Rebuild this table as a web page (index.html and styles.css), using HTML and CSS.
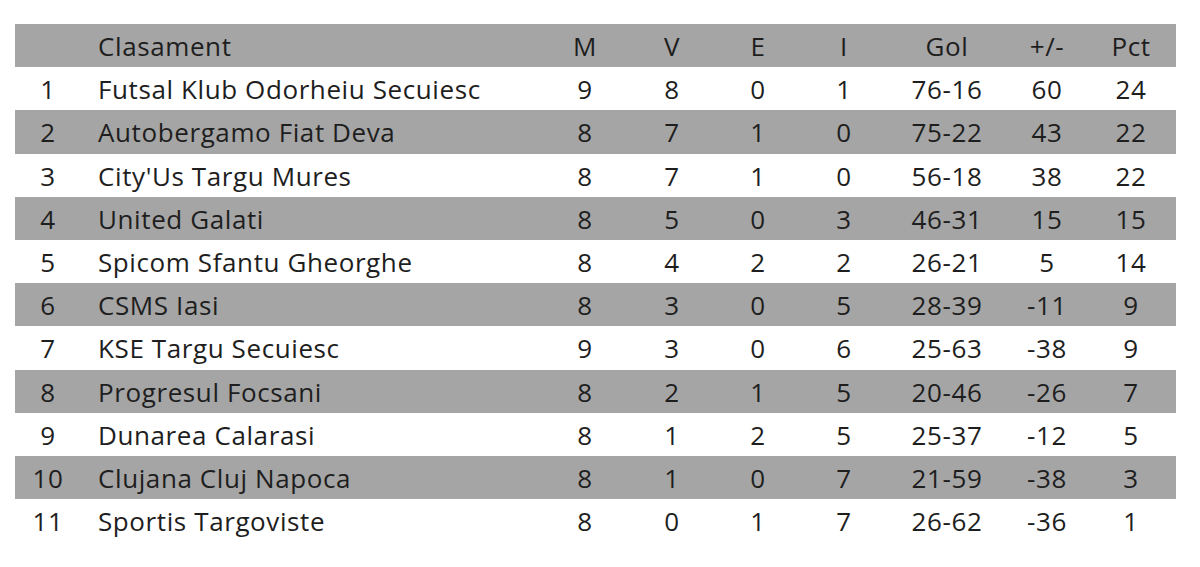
FILE: index.html
```html
<!DOCTYPE html>
<html>
<head>
<meta charset="utf-8">
<link rel="stylesheet" href="styles.css">
</head>
<body>
<div class="standings">
  <div class="row head"><span class="c-pos"></span><span class="c-name">Clasament</span><span class="c-m">M</span><span class="c-v">V</span><span class="c-e">E</span><span class="c-i">I</span><span class="c-gol">Gol</span><span class="c-diff">+/-</span><span class="c-pct">Pct</span></div>
  <div class="row"><span class="c-pos">1</span><span class="c-name">Futsal Klub Odorheiu Secuiesc</span><span class="c-m">9</span><span class="c-v">8</span><span class="c-e">0</span><span class="c-i">1</span><span class="c-gol">76-16</span><span class="c-diff">60</span><span class="c-pct">24</span></div>
  <div class="row alt"><span class="c-pos">2</span><span class="c-name">Autobergamo Fiat Deva</span><span class="c-m">8</span><span class="c-v">7</span><span class="c-e">1</span><span class="c-i">0</span><span class="c-gol">75-22</span><span class="c-diff">43</span><span class="c-pct">22</span></div>
  <div class="row"><span class="c-pos">3</span><span class="c-name">City'Us Targu Mures</span><span class="c-m">8</span><span class="c-v">7</span><span class="c-e">1</span><span class="c-i">0</span><span class="c-gol">56-18</span><span class="c-diff">38</span><span class="c-pct">22</span></div>
  <div class="row alt"><span class="c-pos">4</span><span class="c-name">United Galati</span><span class="c-m">8</span><span class="c-v">5</span><span class="c-e">0</span><span class="c-i">3</span><span class="c-gol">46-31</span><span class="c-diff">15</span><span class="c-pct">15</span></div>
  <div class="row"><span class="c-pos">5</span><span class="c-name">Spicom Sfantu Gheorghe</span><span class="c-m">8</span><span class="c-v">4</span><span class="c-e">2</span><span class="c-i">2</span><span class="c-gol">26-21</span><span class="c-diff">5</span><span class="c-pct">14</span></div>
  <div class="row alt"><span class="c-pos">6</span><span class="c-name">CSMS Iasi</span><span class="c-m">8</span><span class="c-v">3</span><span class="c-e">0</span><span class="c-i">5</span><span class="c-gol">28-39</span><span class="c-diff">-11</span><span class="c-pct">9</span></div>
  <div class="row"><span class="c-pos">7</span><span class="c-name">KSE Targu Secuiesc</span><span class="c-m">9</span><span class="c-v">3</span><span class="c-e">0</span><span class="c-i">6</span><span class="c-gol">25-63</span><span class="c-diff">-38</span><span class="c-pct">9</span></div>
  <div class="row alt"><span class="c-pos">8</span><span class="c-name">Progresul Focsani</span><span class="c-m">8</span><span class="c-v">2</span><span class="c-e">1</span><span class="c-i">5</span><span class="c-gol">20-46</span><span class="c-diff">-26</span><span class="c-pct">7</span></div>
  <div class="row"><span class="c-pos">9</span><span class="c-name">Dunarea Calarasi</span><span class="c-m">8</span><span class="c-v">1</span><span class="c-e">2</span><span class="c-i">5</span><span class="c-gol">25-37</span><span class="c-diff">-12</span><span class="c-pct">5</span></div>
  <div class="row alt"><span class="c-pos">10</span><span class="c-name">Clujana Cluj Napoca</span><span class="c-m">8</span><span class="c-v">1</span><span class="c-e">0</span><span class="c-i">7</span><span class="c-gol">21-59</span><span class="c-diff">-38</span><span class="c-pct">3</span></div>
  <div class="row"><span class="c-pos">11</span><span class="c-name">Sportis Targoviste</span><span class="c-m">8</span><span class="c-v">0</span><span class="c-e">1</span><span class="c-i">7</span><span class="c-gol">26-62</span><span class="c-diff">-36</span><span class="c-pct">1</span></div>
</div>
</body>
</html>
```

FILE: styles.css
```css
html, body {
  margin: 0;
  padding: 0;
  background: #ffffff;
}
body {
  font-family: "Open Sans", Lato, sans-serif;
  font-size: 26px;
  letter-spacing: 0.6px;
  color: #1e1e1e;
}
.standings {
  margin: 24px 0 0 15px;
  width: 1161px;
}
.row {
  display: grid;
  grid-template-columns: 66px 459px 90px 84px 88px 84px 122px 78px 90px;
  height: 43.2px;
  align-items: center;
  padding-top: 1px;
  box-sizing: border-box;
}
.head, .alt {
  background: #a5a5a5;
}
.row span {
  text-align: center;
  white-space: nowrap;
}
.row .c-name {
  text-align: left;
  padding-left: 17px;
}
```
